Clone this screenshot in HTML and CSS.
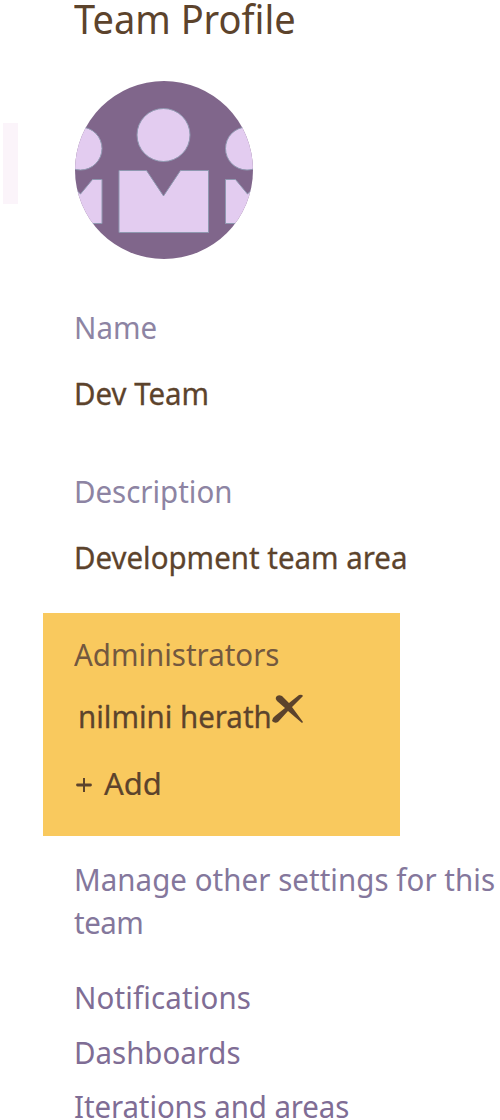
FILE: index.html
```html
<!DOCTYPE html>
<html lang="en">
<head>
<meta charset="utf-8">
<title>Team Profile</title>
<link rel="stylesheet" href="styles.css">
</head>
<body>
<div class="page">
  <aside class="rail"><div class="rail-thumb"></div></aside>
  <main class="profile">
    <h1 class="title condensed">Team Profile</h1>
    <svg class="avatar" viewBox="0 0 178 178" width="178" height="178">
      <defs><clipPath id="disc"><circle cx="89" cy="89" r="89"/></clipPath></defs>
      <g clip-path="url(#disc)">
        <rect width="178" height="178" fill="#80668b"/>
        <g fill="#e3ccf0" stroke="#8f98b0" stroke-width="1">
          <circle cx="88.500" cy="54" r="26.500"/>
          <path d="M44 89.500H71.500L88.500 115l17-25.500h28v62H44z"/>
          <circle cx="5.500" cy="67.500" r="21.500"/>
          <circle cx="172" cy="67.500" r="21.500"/>
          <path d="M27 98.500H17.500L5.500 113-10 98.500v44h37z"/>
          <path d="M150.500 98.500h10L172.500 113 188 98.500v44h-37.500z"/>
        </g>
      </g>
    </svg>
    <div class="label name-label condensed">Name</div>
    <div class="value name-value condensed">Dev Team</div>
    <div class="label desc-label condensed">Description</div>
    <div class="value desc-value condensed">Development team area</div>
    <section class="admins">
      <div class="admins-label condensed">Administrators</div>
      <div class="admin">
        <div class="admin-name"><div class="condensed">nilmini herath</div></div>
        <svg class="remove" viewBox="0 0 32 30" width="32" height="30">
          <path d="M4 3Q6 0 10 2L17 9 27 1Q30 0 31 2L20 13 31 28 30 29 16 17 6 28Q3 30 0 27 0 24 3 22L13 14 5 7Q3 5 4 3z" fill="#5c432c"/>
        </svg>
      </div>
      <div class="add">
        <svg class="plus" viewBox="0 0 16 16" width="16" height="16">
          <path d="M1.500 8h13" stroke="#5c432c" stroke-width="2.800" stroke-linecap="round"/>
          <path d="M8 1v14" stroke="#5c432c" stroke-width="2"/>
        </svg>
        <span class="add-text">Add</span>
      </div>
    </section>
    <p class="other condensed">Manage other settings for this<br><span class="other-end">team</span></p>
    <nav class="links condensed">
      <a class="notif">Notifications</a>
      <a>Dashboards</a>
      <a class="iter">Iterations and areas</a>
    </nav>
  </main>
</div>
</body>
</html>
```
FILE: styles.css
```css
html, body { margin: 0; background: #fff; }
.page {
  display: flex;
  width: 500px;
  height: 1120px;
  overflow: hidden;
  font-family: "Noto Sans", "Open Sans", sans-serif;
  font-size: 31px;
  line-height: 44px;
  white-space: nowrap;
}
.rail { flex: none; width: 43px; padding-top: 123px; }
.rail-thumb { width: 15px; height: 81px; margin-left: 3px; background: #fbf4fa; }
.profile { flex: none; width: 457px; }
.condensed { transform: scaleX(0.95); transform-origin: 0 50%; }
.title {
  margin: 0 0 43px 31px;
  font-size: 40px;
  line-height: 38px;
  font-weight: 400;
  color: #5c432c;
}
.avatar { display: block; margin-left: 32px; }
.label, .value, .other, .links { margin-left: 31px; }
.label { color: #8d84a3; }
.value { color: #5c432c; -webkit-text-stroke: 0.3px #5c432c; }
.name-label { margin-top: 46px; }
.name-value { margin-top: 22px; }
.desc-label { margin-top: 54px; }
.desc-value { margin-top: 22px; }
.admins {
  box-sizing: border-box;
  width: 357px;
  height: 223px;
  margin-top: 34px;
  padding: 19px 0 0 31px;
  background: #f9c95e;
  color: #5c432c;
}
.admins-label { color: #73583f; }
.admin { display: flex; margin: 18px 0 0 4px; }
.admin-name { width: 194px; -webkit-text-stroke: 0.3px #5c432c; }
.remove { flex: none; }
.add { display: flex; margin-top: 23px; }
.add-text { -webkit-text-stroke: 0.2px #5c432c; }
.plus { margin: 16px 12px 0 2px; }
.other { margin-top: 22px; margin-bottom: 0; line-height: 43px; letter-spacing: 0.06px; color: #84779c; }
.other-end { letter-spacing: -0.5px; }
.links { display: grid; grid-auto-rows: 54.500px; margin-top: 31px; color: #7f6d95; }
.notif { letter-spacing: 0.15px; }
.iter { letter-spacing: -0.1px; }
```
